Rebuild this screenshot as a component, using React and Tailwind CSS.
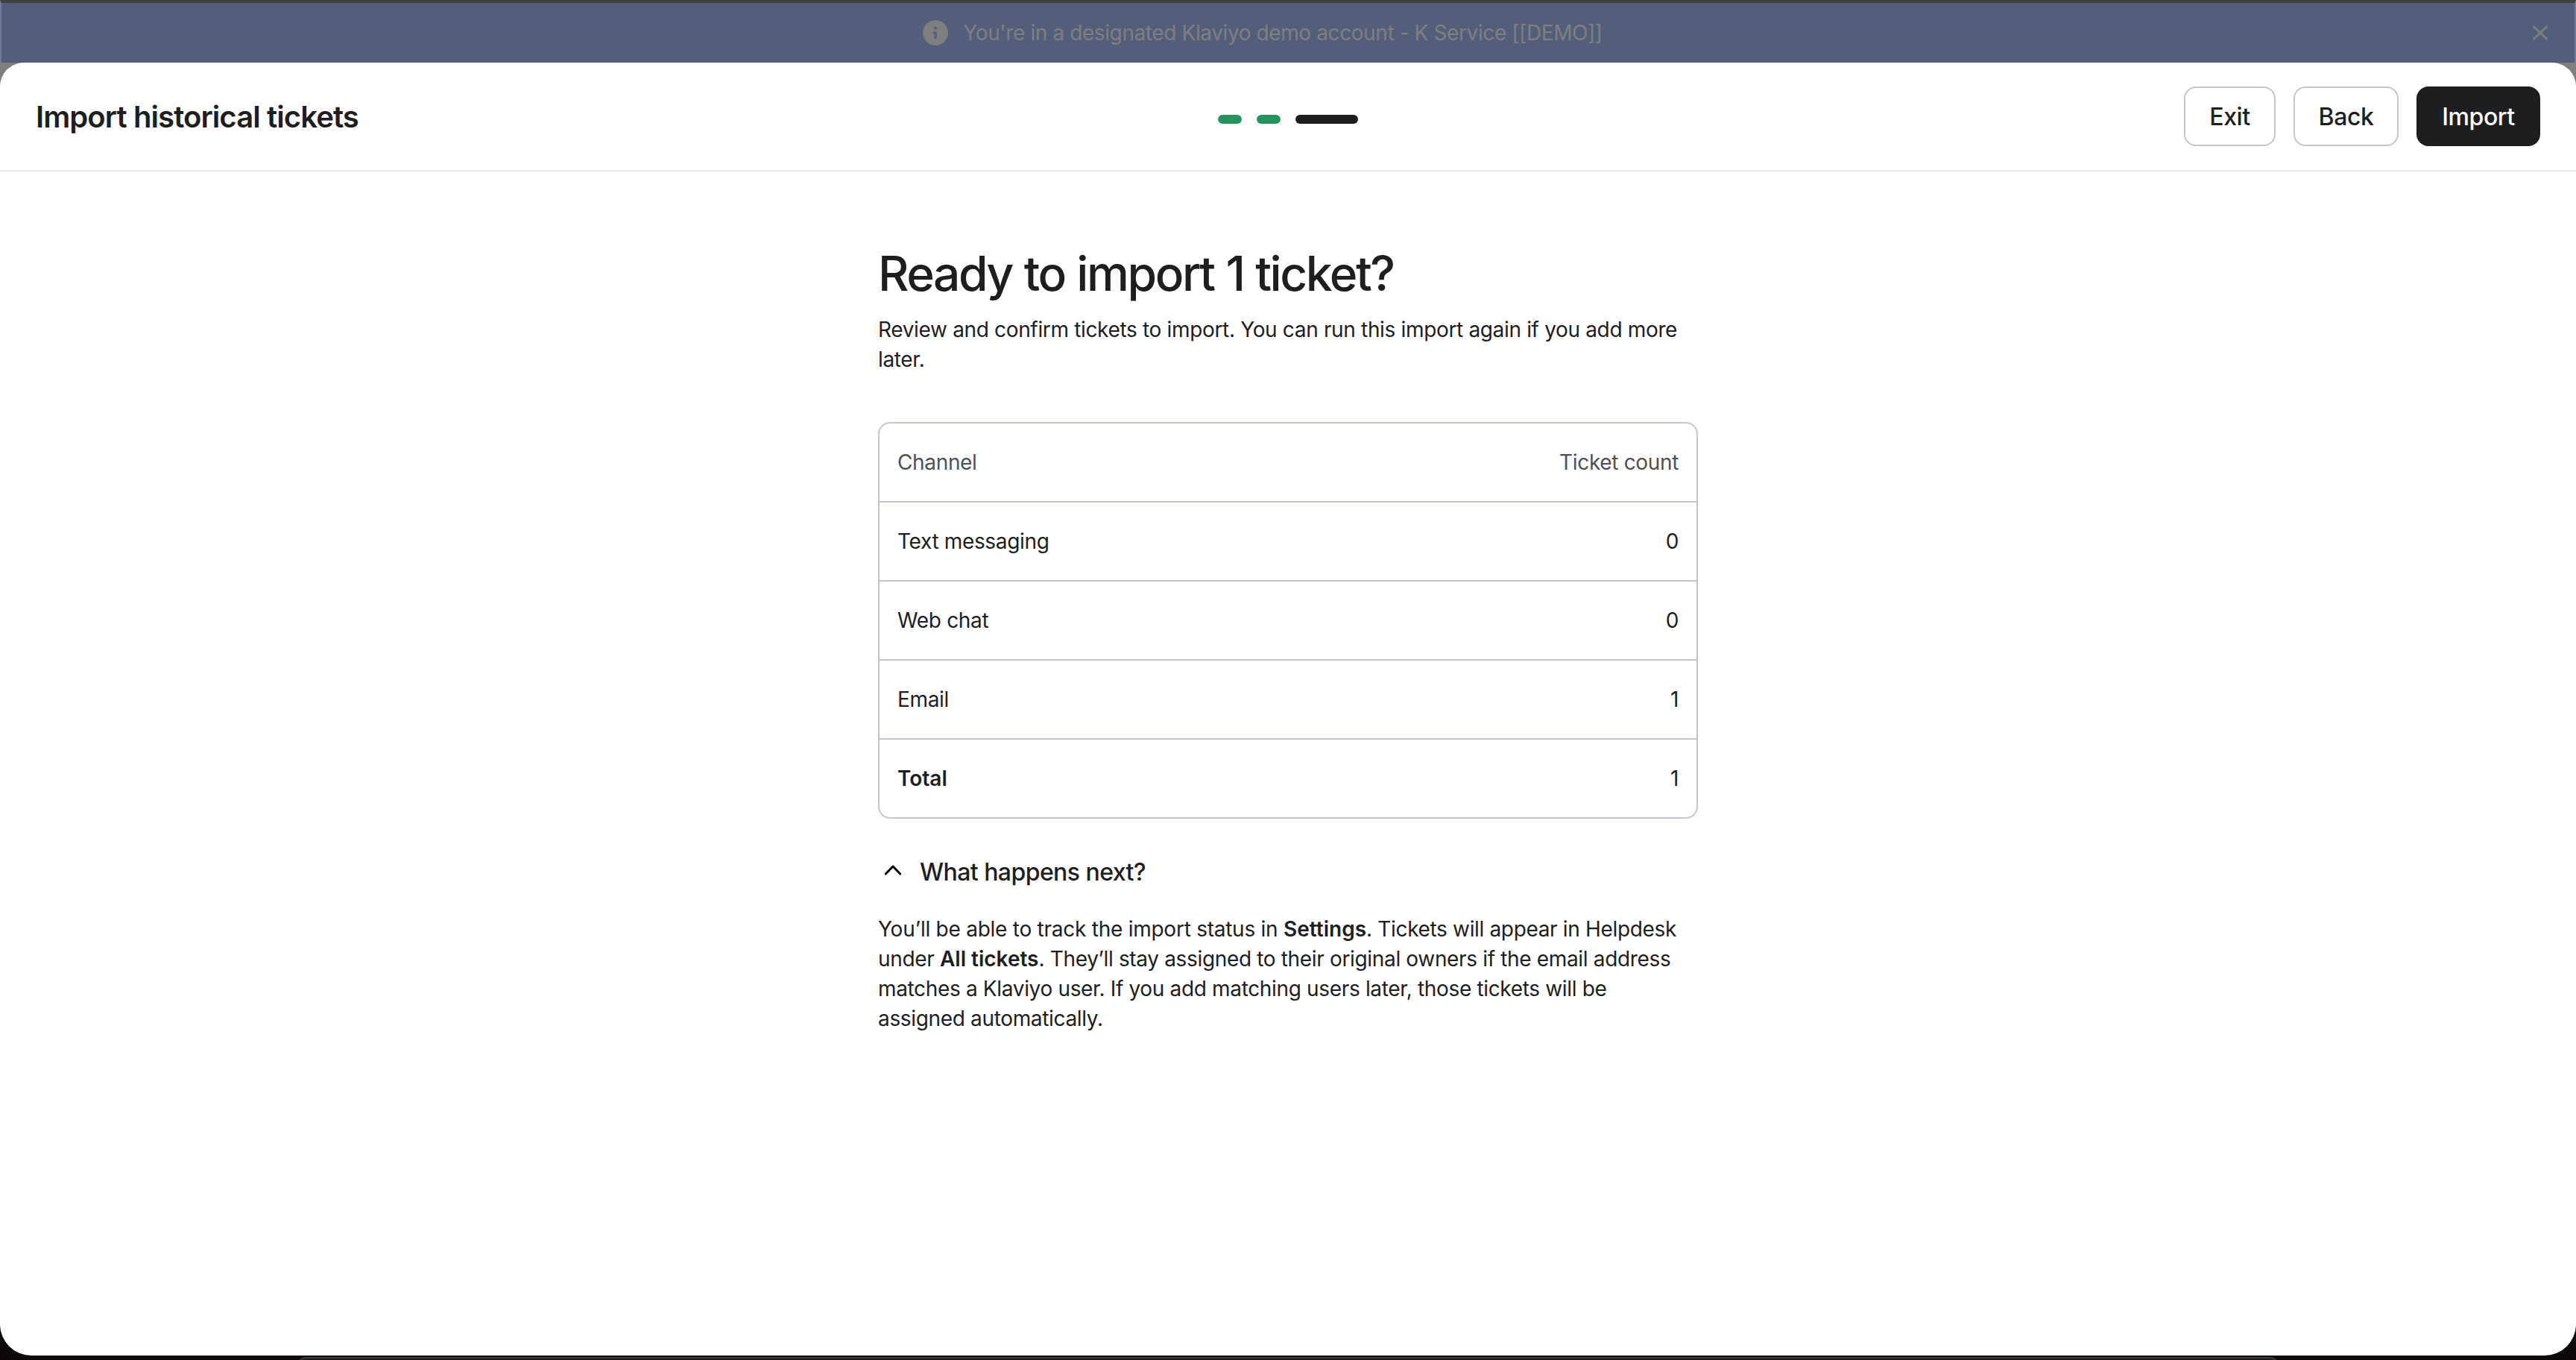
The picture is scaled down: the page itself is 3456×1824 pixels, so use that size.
import React, { useState } from 'react';

const channels = [
  { name: 'Text messaging', count: 0 },
  { name: 'Web chat', count: 0 },
  { name: 'Email', count: 1 },
];

const InfoIcon = () => (
  <svg width="34" height="34" viewBox="0 0 34 34">
    <circle cx="17" cy="17" r="17" fill="#7f7f7f" />
    <circle cx="17" cy="10.7" r="2.1" fill="#535e7b" />
    <path d="M14.9 16.9h2.2v6.8" fill="none" stroke="#535e7b" strokeWidth="3.3" strokeLinecap="round" strokeLinejoin="round" />
  </svg>
);

const CloseIcon = () => (
  <svg width="20" height="20" viewBox="0 0 20 20" fill="none" stroke="#7f7f7f" strokeWidth="2.8" strokeLinecap="round">
    <path d="M1.4 1.4l17.2 17.2M18.6 1.4L1.4 18.6" />
  </svg>
);

const Chevron = ({ open }) => (
  <svg
    width="24"
    height="16"
    viewBox="0 0 24 16"
    fill="none"
    stroke="#000"
    strokeWidth="3"
    strokeLinecap="round"
    strokeLinejoin="round"
    className={open ? '' : 'rotate-180'}
  >
    <path d="M2.3 13L12 3l9.7 10" />
  </svg>
);

const Banner = () => (
  <div className="flex h-[84px] items-center border-x-2 border-t-4 border-x-[#717b95] border-t-[#414141] bg-[#535e7b] pr-9">
    {/* Spacer keeps the message centered next to the close button */}
    <div className="w-[72px]" />
    <div className="flex flex-1 items-center justify-center gap-5 pr-[84px]">
      <InfoIcon />
      <p className="text-[28px] leading-10 tracking-[-0.4px] text-[#7f7f7f]">
        You're in a designated Klaviyo demo account - K Service [[DEMO]]
      </p>
    </div>
    <button>
      <CloseIcon />
    </button>
  </div>
);

const Header = () => (
  <header className="grid h-[146px] shrink-0 grid-cols-[1fr_auto_1fr] items-center border-b-2 border-[#ebebeb] px-12">
    <h1 className="pt-0.5 text-[40px] leading-[48px] font-semibold tracking-[-0.9px]">Import historical tickets</h1>
    {/* Progress steps */}
    <div className="flex gap-5 pt-2">
      <span className="h-3 w-8 rounded-full bg-[#24945c]" />
      <span className="h-3 w-8 rounded-full bg-[#24945c]" />
      <span className="h-3 w-[84px] rounded-full bg-[#1d1e20]" />
    </div>
    <div className="flex justify-end gap-6 text-[32px] font-medium tracking-[-0.4px]">
      <button className="h-20 w-[123px] rounded-2xl border-2 border-[#c2c7cd] pt-px">Exit</button>
      <button className="h-20 w-[141px] rounded-2xl border-2 border-[#c2c7cd] pt-px">Back</button>
      <button className="h-20 w-[166px] rounded-2xl bg-[#1d1e20] pt-px text-white">Import</button>
    </div>
  </header>
);

const App = () => {
  const [isOpen, setIsOpen] = useState(true);

  return (
    <div className="flex h-[1824px] w-[3456px] flex-col overflow-hidden bg-[#0d090a] font-['Inter',sans-serif] text-[#1d1e20]">
      <Banner />
      <div className="flex flex-1 flex-col bg-[linear-gradient(#7f7f7f_50%,#0d090a_50%)]">
        <div className="flex flex-1 flex-col overflow-hidden rounded-t-[32px] rounded-b-[42px] bg-white">
          <Header />
          <main className="mx-auto w-[1100px] pt-[97px]">
            <h2 className="text-[64px] leading-[80px] font-medium tracking-[-2.4px] [word-spacing:1px]">
              Ready to import 1 ticket?
            </h2>
            <p className="mt-[15px] text-[28px] leading-10 tracking-[-0.34px]">
              Review and confirm tickets to import. You can run this import again if you add more later.
            </p>

            {/* Ticket counts by channel */}
            <div className="mt-16 divide-y-2 divide-[#c2c7cd] rounded-2xl border-2 border-[#c2c7cd] text-[28px] tracking-[-0.34px]">
              <div className="flex h-[106px] items-center justify-between px-6 text-[#4f5052]">
                <span>Channel</span>
                <span>Ticket count</span>
              </div>
              {channels.map((channel) => (
                <div key={channel.name} className="flex h-[106px] items-center justify-between px-6">
                  <span>{channel.name}</span>
                  <span>{channel.count}</span>
                </div>
              ))}
              <div className="flex h-[104px] items-center justify-between px-6">
                <span className="font-semibold tracking-normal">Total</span>
                <span>1</span>
              </div>
            </div>

            <button onClick={() => setIsOpen(!isOpen)} className="mt-12 flex h-12 items-center gap-6 pl-2">
              <span className="pb-1.5">
                <Chevron open={isOpen} />
              </span>
              <span className="text-[32px] leading-[48px] font-medium tracking-[-0.56px]">What happens next?</span>
            </button>
            {isOpen && (
              <p className="mt-8 text-[28px] leading-10 tracking-[-0.34px]">
                <span className="tracking-[-0.25px]">You’ll be able to track the import status in </span>
                <b className="font-semibold tracking-normal">Settings</b>. Tickets will appear in Helpdesk under{' '}
                <b className="font-semibold tracking-normal">All tickets</b>. They’ll stay assigned to their original
                owners if the email address matches a Klaviyo user. If you add matching users later, those tickets will
                be assigned automatically.
              </p>
            )}
          </main>
        </div>
      </div>
      {/* Top edge of the dock under the window */}
      <div className="h-1.5 shrink-0 overflow-hidden pt-0.5 pr-[396px] pl-[396px]">
        <div className="h-8 rounded-t-2xl border-2 border-[#413c3a] bg-[#1e1a1a]" />
      </div>
    </div>
  );
};

export default App;
